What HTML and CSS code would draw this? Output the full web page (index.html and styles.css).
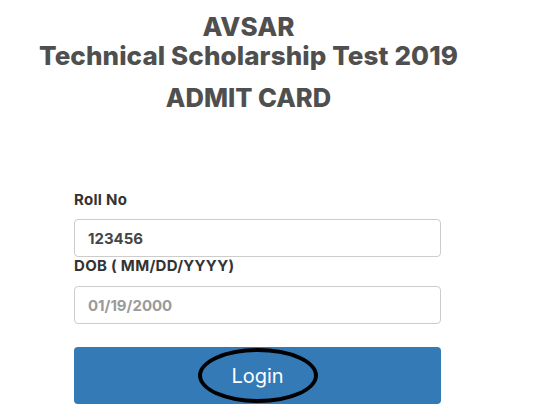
FILE: index.html
```html
<!DOCTYPE html>
<html>
<head>
<meta charset="utf-8">
<link rel="stylesheet" href="styles.css">
</head>
<body>
<header class="head">
  <h1 class="title">AVSAR<br>Technical Scholarship Test 2019</h1>
  <h2 class="sub">ADMIT CARD</h2>
</header>
<form class="form">
  <label class="label">Roll No</label>
  <div class="input filled">123456</div>
  <label class="label dob">DOB ( MM/DD/YYYY)</label>
  <div class="input placeholder">01/19/2000</div>
  <div class="btn"><span class="btn-text">Login</span><span class="ring"></span></div>
</form>
</body>
</html>
```
FILE: styles.css
```css
html, body { margin: 0; padding: 0; background: #fff; }
body { font-family: "Inter", "DejaVu Sans", sans-serif; color: #4a4a4a; width: 541px; height: 410px; overflow: hidden; }
.head { width: 497px; text-align: center; padding-top: 12px; }
.title { margin: 0; font-size: 26px; line-height: 29px; font-weight: 800; color: #4f4f4f; letter-spacing: 0.1px; }
.sub { margin: 14px 0 0; font-size: 25.5px; line-height: 28px; font-weight: 800; color: #4f4f4f; }
.form { margin: 79px 0 0 74px; width: 367px; display: flex; flex-direction: column; }
.label { font-size: 15px; font-weight: 700; color: #333; line-height: 18px; margin-bottom: 10px; letter-spacing: 0.3px; }
.label.dob { margin-bottom: 11px; }
.input { box-sizing: border-box; height: 38px; border: 1px solid #ccc; border-radius: 4px; padding: 0 13px; display: flex; align-items: center; font-size: 15px; font-weight: 700; }
.filled { color: #454545; }
.placeholder { color: #9a9a9a; }
.btn { position: relative; margin-top: 23px; height: 57px; background: #337ab7; border-radius: 4px; display: flex; align-items: center; justify-content: center; }
.btn-text { color: #fff; font-size: 20px; font-weight: 400; }
.ring { position: absolute; left: 124px; top: 1px; width: 120px; height: 55px; box-sizing: border-box; border: 4px solid #000; border-radius: 50%; }
```
